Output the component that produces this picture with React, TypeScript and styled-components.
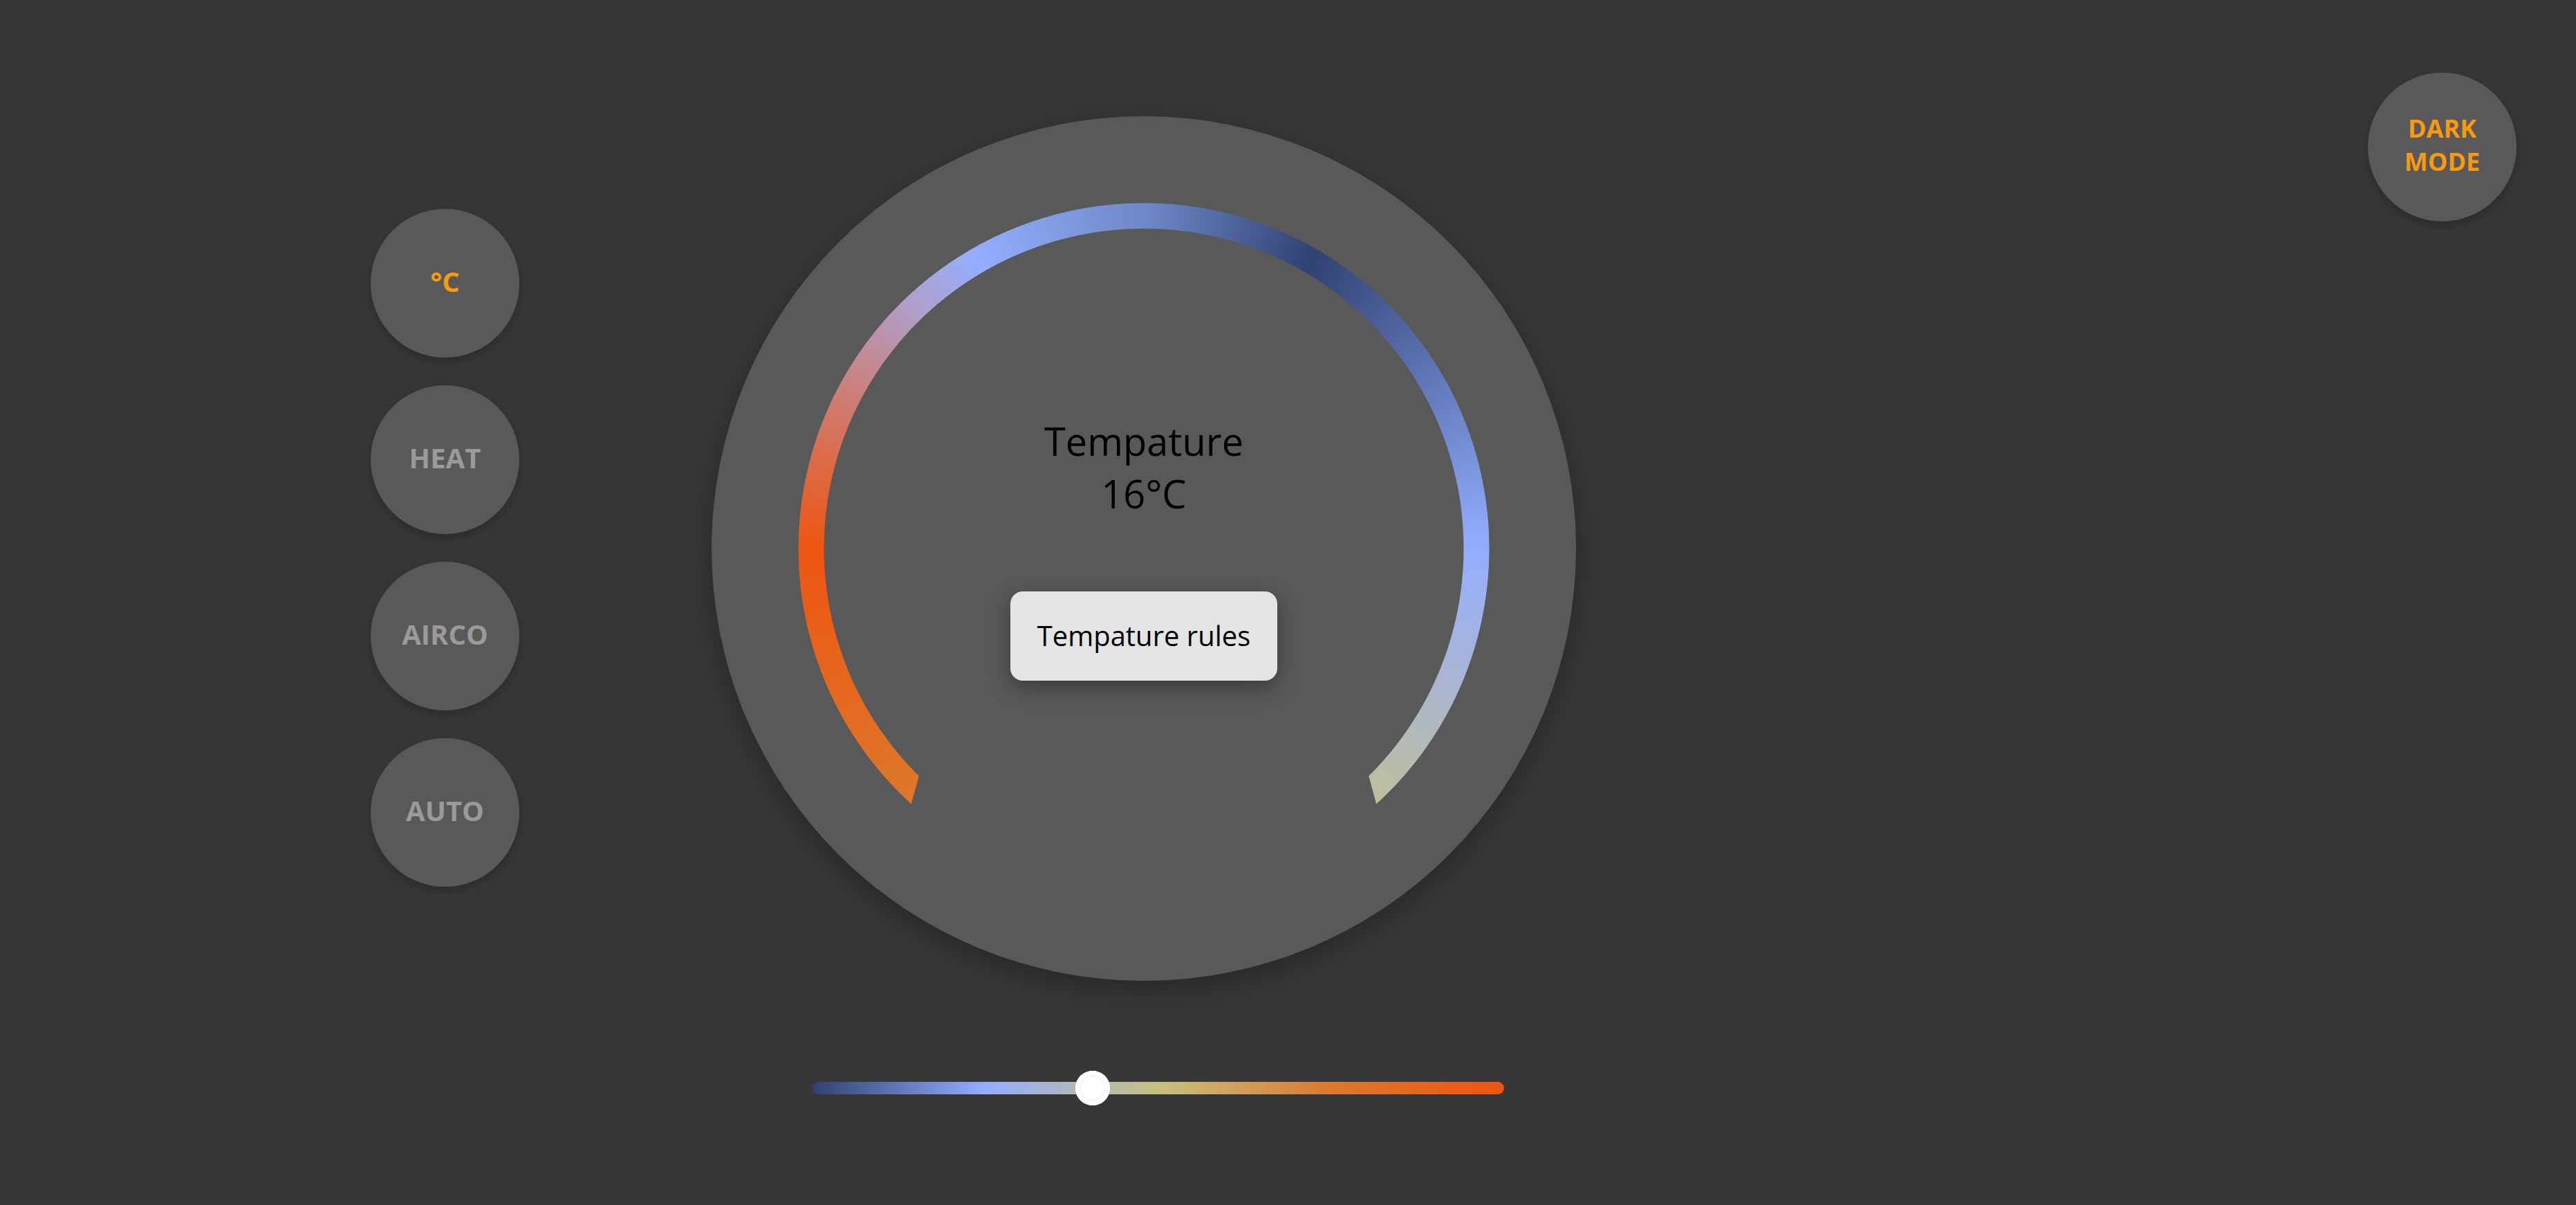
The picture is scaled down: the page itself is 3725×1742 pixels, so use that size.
import React, { useState } from 'react';
import styled, { createGlobalStyle } from 'styled-components';

const colours = {
  page: '#373737',
  surface: '#595959',
  accent: '#f89a10',
  muted: '#9a9a9a',
  button: '#e4e4e4',
};

const GlobalStyle = createGlobalStyle`
  html, body {
    margin: 0;
    padding: 0;
    background: ${colours.page};
  }
  body {
    font-family: "Open Sans", "Noto Sans", sans-serif;
  }
`;

const StyledPage = styled.div`
  display: flex;
  align-items: flex-start;
  box-sizing: border-box;
  width: 100%;
  min-height: 100vh;
  padding: 105px 86px 0 536px;
  background: ${colours.page};
`;

const Layout = styled.div`
  display: grid;
  grid-template-columns: 215px 1250px;
  column-gap: 278px;
  row-gap: 130px;
  margin-top: 63px;
`;

const ModeColumn = styled.div`
  display: flex;
  flex-direction: column;
  gap: 40px;
  align-self: center;
  margin-bottom: 3px;
`;

const RoundButton = styled.button<{ $active?: boolean; $size?: number; $lineHeight?: number }>`
  display: flex;
  align-items: center;
  justify-content: center;
  box-sizing: border-box;
  width: 215px;
  height: 215px;
  padding: 0 0 5px;
  border: none;
  border-radius: 50%;
  background: ${colours.surface};
  box-shadow: 0 6px 16px rgba(0, 0, 0, 0.22);
  color: ${({ $active }) => ($active ? colours.accent : colours.muted)};
  font-family: inherit;
  font-size: ${({ $size }) => $size || 40}px;
  font-weight: 700;
  line-height: ${({ $lineHeight }) => $lineHeight || 'normal'};
  text-align: center;
  cursor: pointer;
`;

const DarkModeButton = styled(RoundButton)`
  margin-left: auto;
  flex-shrink: 0;
`;

const Dial = styled.div`
  display: flex;
  align-items: center;
  justify-content: center;
  width: 1250px;
  height: 1250px;
  border-radius: 50%;
  background: ${colours.surface};
  box-shadow: 0 12px 40px rgba(0, 0, 0, 0.3);
`;

const Gauge = styled.div`
  position: relative;
  display: flex;
  flex-direction: column;
  align-items: center;
  justify-content: center;
  gap: 104px;
  box-sizing: border-box;
  width: 1000px;
  height: 1000px;
  padding-bottom: 4px;

  &::before {
    content: '';
    position: absolute;
    inset: 0;
    border-radius: 50%;
    background: conic-gradient(
      #6f88c8 0deg,
      #2f4272 30deg,
      #94aeff 90deg,
      #a8b5d6 112deg,
      #c0bf96 140deg,
      #c8c080 180deg,
      #dc7a2c 220deg,
      #ee5511 270deg,
      #d6725a 290deg,
      #c5878f 303deg,
      #b09fc8 316deg,
      #94aeff 330deg,
      #6f88c8 360deg
    );
    -webkit-mask: radial-gradient(circle closest-side, transparent calc(100% - 38px), #000 calc(100% - 37px), #000 calc(100% - 1px), transparent 100%);
    mask: radial-gradient(circle closest-side, transparent calc(100% - 38px), #000 calc(100% - 37px), #000 calc(100% - 1px), transparent 100%);
    clip-path: polygon(0 0, 100% 0, 100% 100%, 872px 100%, 790px 700px, 210px 700px, 128px 100%, 0 100%);
  }
`;

const Reading = styled.p`
  margin: 0;
  color: #000;
  font-size: 56px;
  line-height: normal;
  text-align: center;
`;

const RulesButton = styled.button`
  padding: 36px 39px 38px;
  border: none;
  border-radius: 18px;
  background: ${colours.button};
  box-shadow: 0 10px 30px rgba(0, 0, 0, 0.35);
  color: #000;
  font-family: inherit;
  font-size: 40px;
  line-height: normal;
  cursor: pointer;
`;

const TempSlider = styled.input`
  grid-column: 2;
  -webkit-appearance: none;
  appearance: none;
  display: block;
  width: 1000px;
  height: 50px;
  margin: 0 0 0 146px;
  padding: 0;
  background: transparent;
  outline: none;

  &::-webkit-slider-runnable-track {
    height: 18px;
    border-radius: 9px;
    background: linear-gradient(to right, #2f4272 0%, #94aeff 25%, #c8c080 50%, #dc7830 75%, #ee5511 100%);
  }

  &::-webkit-slider-thumb {
    -webkit-appearance: none;
    width: 50px;
    height: 50px;
    margin-top: -16px;
    border: none;
    border-radius: 50%;
    background: #fff;
    box-shadow: inset 0 0 0 7px #fff, inset 0 0 0 8px #ececec;
  }
`;

const modes = [
  { label: '°C', active: true },
  { label: 'HEAT', active: false },
  { label: 'AIRCO', active: false },
  { label: 'AUTO', active: false },
];

export default function App() {
  const [temp, setTemp] = useState(16);

  return (
    <>
      <GlobalStyle />
      <StyledPage>
        <Layout>
          <ModeColumn>
            {modes.map((m) => (
              <RoundButton key={m.label} $active={m.active}>
                {m.label}
              </RoundButton>
            ))}
          </ModeColumn>
          <Dial>
            <Gauge>
              <Reading>
                Tempature
                <br />
                {temp}°C
              </Reading>
              <RulesButton>Tempature rules</RulesButton>
            </Gauge>
          </Dial>
          <TempSlider
            type="range"
            min={0}
            max={40}
            value={temp}
            onChange={(e) => setTemp(Number(e.target.value))}
          />
        </Layout>
        <DarkModeButton $active $size={36} $lineHeight={1.32}>
          DARK
          <br />
          MODE
        </DarkModeButton>
      </StyledPage>
    </>
  );
}
